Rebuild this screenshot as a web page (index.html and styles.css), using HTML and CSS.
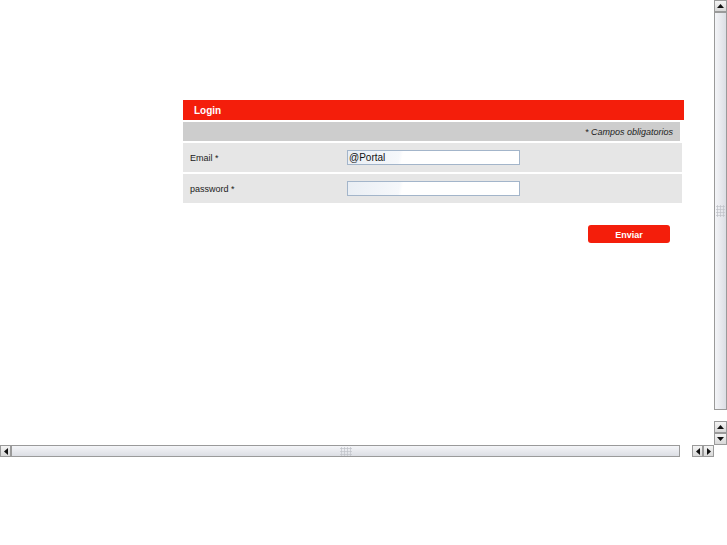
FILE: index.html
```html
<!DOCTYPE html>
<html lang="es">
<head>
    <meta charset="UTF-8">
    <title>Login</title>
    <link rel="stylesheet" href="styles.css">
</head>
<body>
    <div class="window">
        <div class="viewport">
            <div class="login">
                <div class="login-title">Login</div>
                <div class="required-bar">* Campos obligatorios</div>
                <div class="form-row">
                    <label class="form-label" for="email">Email *</label>
                    <div class="form-field"><input id="email" type="text" value="@Portal"></div>
                </div>
                <div class="form-row">
                    <label class="form-label" for="pass">password *</label>
                    <div class="form-field"><input id="pass" type="password"></div>
                </div>
                <div class="actions">
                    <button class="btn-send">Enviar</button>
                </div>
            </div>
        </div>

        <div class="vscroll">
            <div class="sb-btn"><svg width="7" height="4" viewBox="0 0 7 4"><path d="M3.5 0 7 4H0z"/></svg></div>
            <div class="sb-thumb vthumb"><span class="grip"></span></div>
            <div class="sb-space"></div>
            <div class="sb-btn"><svg width="7" height="4" viewBox="0 0 7 4"><path d="M3.5 0 7 4H0z"/></svg></div>
            <div class="sb-btn"><svg width="7" height="4" viewBox="0 0 7 4"><path d="M0 0h7L3.5 4z"/></svg></div>
        </div>
        <div class="hscroll">
            <div class="sb-btn"><svg width="4" height="7" viewBox="0 0 4 7"><path d="M0 3.5 4 0v7z"/></svg></div>
            <div class="sb-thumb hthumb"><span class="grip"></span></div>
            <div class="sb-space"></div>
            <div class="sb-btn"><svg width="4" height="7" viewBox="0 0 4 7"><path d="M0 3.5 4 0v7z"/></svg></div>
            <div class="sb-btn"><svg width="4" height="7" viewBox="0 0 4 7"><path d="M4 3.5 0 0v7z"/></svg></div>
        </div>
        <div class="corner"></div>
    </div>
</body>
</html>
```

FILE: styles.css
```css
body {
    margin: 0;
    background-color: #fff;
    font-family: "Liberation Sans", Arial, sans-serif;
}
.window {
    display: grid;
    grid-template-columns: 714px 13px;
    grid-template-rows: 445px 13px;
    width: 727px;
}
.viewport {
    overflow: hidden;
    background-color: #fff;
}
.login {
    margin: 100px 0 0 183px;
    width: 501px;
}
.login-title {
    height: 20px;
    line-height: 21px;
    background-color: #f41e0b;
    color: #fff;
    font-weight: bold;
    font-size: 10px;
    padding-left: 11px;
}
.required-bar {
    margin-top: 2px;
    width: 497px;
    height: 19px;
    line-height: 20px;
    background-color: #cdcdcd;
    color: #222;
    font-size: 9px;
    font-style: italic;
    text-align: right;
    box-sizing: border-box;
    padding-right: 7px;
}
.form-row {
    display: flex;
    align-items: center;
    margin-top: 2px;
    width: 499px;
    height: 29px;
    background-color: #e6e6e6;
}
.form-label {
    width: 164px;
    padding-left: 7px;
    box-sizing: border-box;
    font-size: 9px;
    color: #222;
}
.form-field input {
    display: block;
    width: 173px;
    height: 15px;
    margin: 0;
    padding: 0 1px;
    box-sizing: border-box;
    border: 1px solid #a3b5ca;
    background: linear-gradient(100deg, #e9eef4 0%, #f6f8fb 30%, #fff 32%, #fff 100%);
    font-family: "Liberation Sans", Arial, sans-serif;
    font-size: 10px;
    color: #111;
}
.actions {
    display: flex;
    justify-content: flex-end;
    margin-top: 22px;
    padding-right: 14px;
}
.btn-send {
    width: 82px;
    height: 18px;
    padding: 1px 0 0;
    border: none;
    border-radius: 3px;
    background-color: #f41e0b;
    color: #fff;
    font-family: "Liberation Sans", Arial, sans-serif;
    font-weight: bold;
    font-size: 9px;
    cursor: pointer;
}

/* fake frame scrollbars */
.vscroll,
.hscroll {
    display: flex;
    background-color: #fff;
}
.vscroll {
    flex-direction: column;
}
.hscroll {
    height: 12px;
}
.sb-btn {
    display: flex;
    align-items: center;
    justify-content: center;
    background: linear-gradient(#f4f4f4, #d8d8d8);
    border: 1px solid #9a9a9a;
    box-sizing: border-box;
}
.vscroll .sb-btn {
    flex: 0 0 12px;
    width: 13px;
}
.hscroll .sb-btn {
    flex: 0 0 11px;
    height: 12px;
}
.sb-btn svg {
    fill: #111;
}
.sb-thumb {
    flex: 1;
    display: flex;
    align-items: center;
    justify-content: center;
    border: 1px solid #9a9a9a;
    box-sizing: border-box;
}
.vthumb {
    background: linear-gradient(90deg, #f4f5f8, #dcdee4);
}
.hthumb {
    background: linear-gradient(#f4f5f8, #dcdee4);
}
.grip {
    width: 12px;
    height: 12px;
    background-image: radial-gradient(#c4c6cc 45%, transparent 55%);
    background-size: 3px 3px;
}
.vthumb .grip {
    width: 9px;
}
.hthumb .grip {
    height: 9px;
}
.vscroll .sb-space {
    flex: 0 0 11px;
}
.hscroll .sb-space {
    flex: 0 0 12px;
}
.corner {
    background-color: #fff;
}
```
